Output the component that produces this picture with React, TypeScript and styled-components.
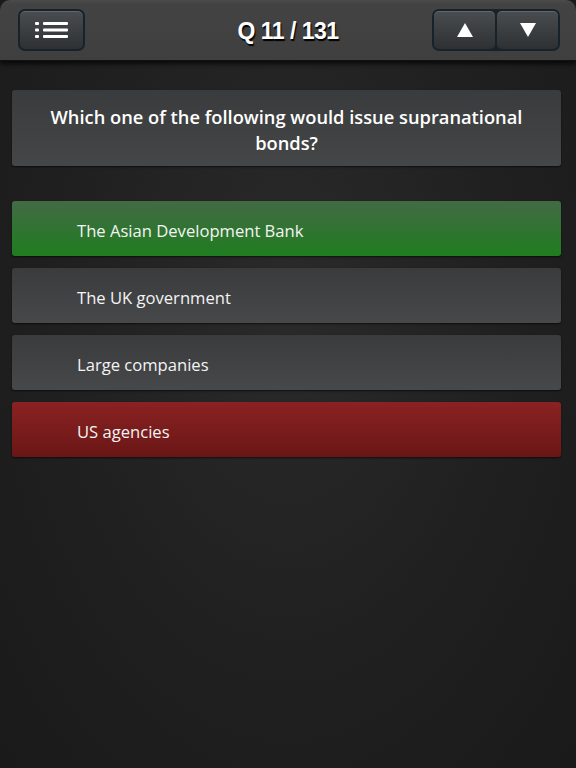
import styled, { createGlobalStyle } from "styled-components";

const GlobalStyle = createGlobalStyle`
  html, body {
    margin: 0;
    padding: 0;
    background: #1c1c1c;
  }
  #root {
    min-height: 768px;
  }
`;

type Answer = { text: string; state: "right" | "wrong" | "plain" };

const answers: Answer[] = [
  { text: "The Asian Development Bank", state: "right" },
  { text: "The UK government", state: "plain" },
  { text: "Large companies", state: "plain" },
  { text: "US agencies", state: "wrong" },
];

export default function App() {
  return (
    <Page>
      <GlobalStyle />
      <TopBar>
        <MenuButton>
          <svg width="34" height="18" viewBox="0 0 34 18">
            <g fill="#fff">
              <rect x="0" y="1" width="4" height="3" rx="1" />
              <rect x="0" y="7.5" width="4" height="3" rx="1" />
              <rect x="0" y="14" width="4" height="3" rx="1" />
              <rect x="8" y="1" width="25" height="3" rx="1" />
              <rect x="8" y="7.5" width="25" height="3" rx="1" />
              <rect x="8" y="14" width="25" height="3" rx="1" />
            </g>
          </svg>
        </MenuButton>
        <Title>Q 11 / 131</Title>
        <NavGroup>
          <NavButton>
            <svg width="18" height="16" viewBox="0 0 18 16">
              <polygon points="9,1 17,15 1,15" fill="#fff" />
            </svg>
          </NavButton>
          <NavButton>
            <svg width="18" height="16" viewBox="0 0 18 16">
              <polygon points="1,1 17,1 9,15" fill="#fff" />
            </svg>
          </NavButton>
        </NavGroup>
      </TopBar>
      <Content>
        <Question>Which one of the following would issue supranational bonds?</Question>
        <AnswerList>
          {answers.map((a) => (
            <AnswerRow key={a.text} $state={a.state}>
              {a.text}
            </AnswerRow>
          ))}
        </AnswerList>
      </Content>
    </Page>
  );
}

const Page = styled.div`
  width: 576px;
  height: 768px;
  overflow: hidden;
  background: radial-gradient(ellipse at 50% 40%, #2a2a2a 0%, #1f1f1f 60%, #1a1a1a 100%);
  font-family: "Open Sans", "DejaVu Sans", sans-serif;
`;

const TopBar = styled.div`
  height: 61px;
  display: flex;
  align-items: center;
  justify-content: space-between;
  padding: 0 16px 0 18px;
  box-sizing: border-box;
  background: linear-gradient(#4a4b4a 0px, #424342 4px, #3e3f3e 100%);
  border-radius: 10px 10px 0 0;
  position: relative;
  box-shadow: 0 3px 4px rgba(0, 0, 0, 0.7);
  border-bottom: 1px solid #111;
`;

const MenuButton = styled.div`
  width: 67px;
  height: 42px;
  box-sizing: border-box;
  border-radius: 7px;
  border: 2px solid #18222b;
  background: linear-gradient(#4a4d50, #2e3134);
  box-shadow: inset 0 1px 0 rgba(255, 255, 255, 0.15);
  display: flex;
  align-items: center;
  justify-content: center;
`;

const Title = styled.div`
  position: absolute;
  left: 0;
  right: 0;
  text-align: center;
  pointer-events: none;
  font-family: "Liberation Sans", Arial, sans-serif;
  font-weight: bold;
  font-size: 23px;
  color: #fff;
  letter-spacing: -0.5px;
  text-shadow: 1px 2px 1px #000;
  padding-top: 2px;
`;

const NavGroup = styled.div`
  display: flex;
  gap: 2px;
  background: #18222b;
  border-radius: 7px;
  padding: 2px;
`;

const NavButton = styled.div`
  width: 61px;
  height: 38px;
  border-radius: 5px;
  background: linear-gradient(#4a4d50, #2e3134);
  box-shadow: inset 0 1px 0 rgba(255, 255, 255, 0.15);
  display: flex;
  align-items: center;
  justify-content: center;
`;

const Content = styled.div`
  padding: 29px 15px 0 12px;
  display: flex;
  flex-direction: column;
  gap: 35px;
`;

const Question = styled.div`
  height: 76px;
  box-sizing: border-box;
  padding: 3px 10px 0;
  border-radius: 3px;
  background: linear-gradient(#3a3b3c, #454647);
  box-shadow: 0 1px 2px rgba(0, 0, 0, 0.6);
  display: flex;
  align-items: center;
  justify-content: center;
  text-align: center;
  color: #fff;
  font-weight: 600;
  font-size: 18.3px;
  line-height: 26px;
`;

const AnswerList = styled.div`
  display: flex;
  flex-direction: column;
  gap: 12px;
`;

const rowBg = {
  right: "linear-gradient(#436a45, #1f7d1f)",
  wrong: "linear-gradient(#8a2222, #6a1616)",
  plain: "linear-gradient(#3a3b3c, #47484a)",
};

const AnswerRow = styled.div<{ $state: Answer["state"] }>`
  height: 55px;
  box-sizing: border-box;
  padding: 3px 0 0 65px;
  border-radius: 3px;
  background: ${(p) => rowBg[p.$state]};
  box-shadow: 0 1px 2px rgba(0, 0, 0, 0.6);
  display: flex;
  align-items: center;
  color: #f4f4f4;
  font-size: 16.6px;
`;
